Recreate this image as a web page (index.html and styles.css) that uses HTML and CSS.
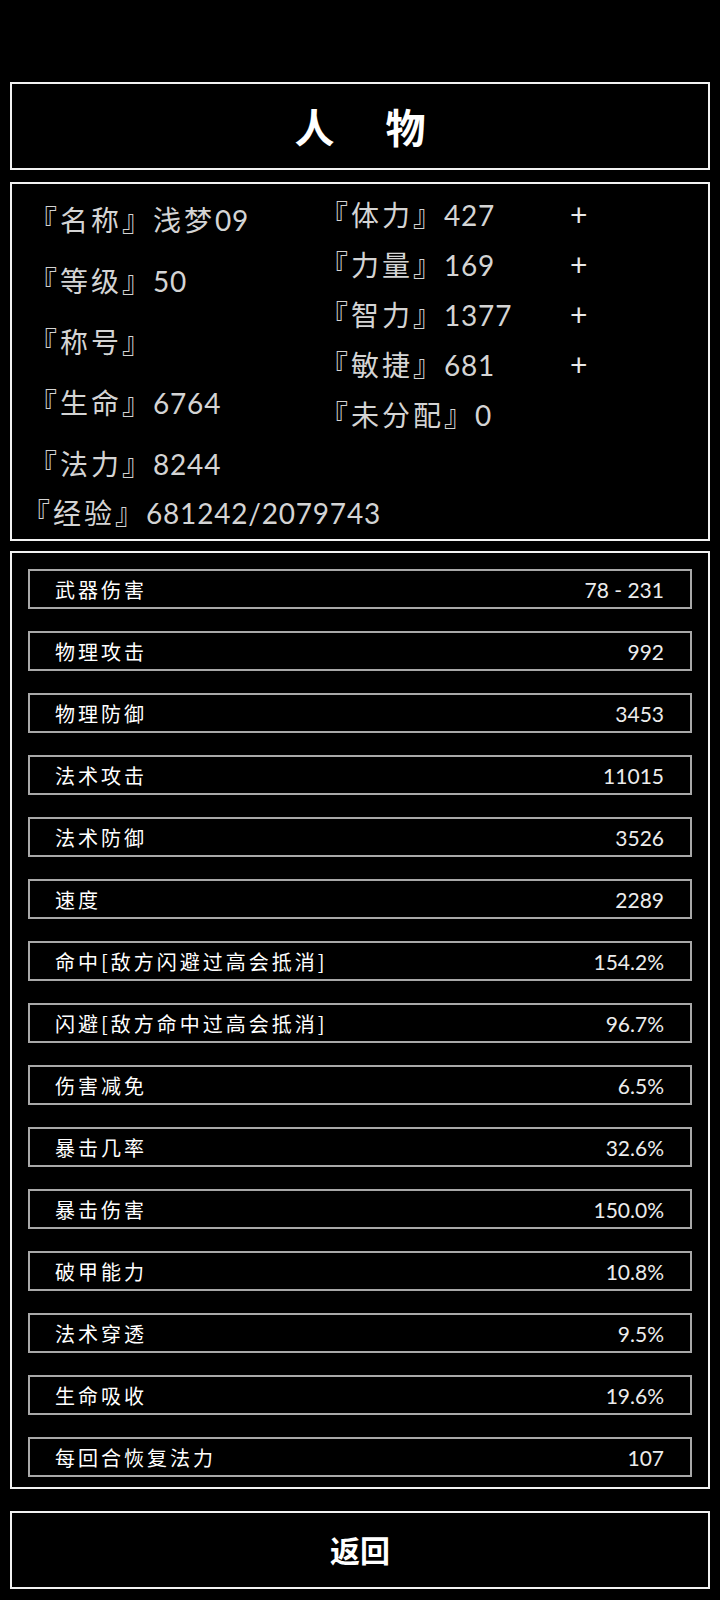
FILE: index.html
```html
<!DOCTYPE html>
<html lang="zh">
<head>
<meta charset="utf-8">
<title>人物</title>
<link rel="stylesheet" href="styles.css">
</head>
<body>
<div class="page">
  <div class="title-box">
    <span class="title-char">人</span>
    <span class="title-char">物</span>
  </div>

  <div class="info-box">
    <div class="info-cols">
      <div class="col-left">
        <div class="line">『名称』浅梦<span class="num">09</span></div>
        <div class="line">『等级』<span class="num">50</span></div>
        <div class="line">『称号』</div>
        <div class="line">『生命』<span class="num">6764</span></div>
        <div class="line">『法力』<span class="num">8244</span></div>
      </div>
      <div class="col-right">
        <div class="attr"><span>『体力』<span class="num">427</span></span><span class="plus">+</span></div>
        <div class="attr"><span>『力量』<span class="num">169</span></span><span class="plus">+</span></div>
        <div class="attr"><span>『智力』<span class="num">1377</span></span><span class="plus">+</span></div>
        <div class="attr"><span>『敏捷』<span class="num">681</span></span><span class="plus">+</span></div>
        <div class="attr"><span>『未分配』<span class="num">0</span></span></div>
      </div>
    </div>
    <div class="exp">『经验』<span class="num">681242/2079743</span></div>
  </div>

  <div class="stats-box">
    <div class="stat"><span class="label">武器伤害</span><span class="value">78 - 231</span></div>
    <div class="stat"><span class="label">物理攻击</span><span class="value">992</span></div>
    <div class="stat"><span class="label">物理防御</span><span class="value">3453</span></div>
    <div class="stat"><span class="label">法术攻击</span><span class="value">11015</span></div>
    <div class="stat"><span class="label">法术防御</span><span class="value">3526</span></div>
    <div class="stat"><span class="label">速度</span><span class="value">2289</span></div>
    <div class="stat"><span class="label">命中[敌方闪避过高会抵消]</span><span class="value">154.2%</span></div>
    <div class="stat"><span class="label">闪避[敌方命中过高会抵消]</span><span class="value">96.7%</span></div>
    <div class="stat"><span class="label">伤害减免</span><span class="value">6.5%</span></div>
    <div class="stat"><span class="label">暴击几率</span><span class="value">32.6%</span></div>
    <div class="stat"><span class="label">暴击伤害</span><span class="value">150.0%</span></div>
    <div class="stat"><span class="label">破甲能力</span><span class="value">10.8%</span></div>
    <div class="stat"><span class="label">法术穿透</span><span class="value">9.5%</span></div>
    <div class="stat"><span class="label">生命吸收</span><span class="value">19.6%</span></div>
    <div class="stat"><span class="label">每回合恢复法力</span><span class="value">107</span></div>
  </div>

  <div class="back-btn">返回</div>
</div>
</body>
</html>
```

FILE: styles.css
```css
* {
  box-sizing: border-box;
}

html, body {
  margin: 0;
  padding: 0;
  background: #000;
}

body {
  width: 720px;
  height: 1600px;
  overflow: hidden;
  font-family: "Noto Sans CJK SC", "Noto Sans", sans-serif;
  color: #fff;
}

.page {
  padding: 82px 10px 0 10px;
  display: flex;
  flex-direction: column;
}

.num {
  font-family: Lato, "Open Sans", sans-serif;
  letter-spacing: 0.8px;
}

/* Title */
.title-box {
  height: 88px;
  border: 2px solid #f2f2f2;
  display: flex;
  justify-content: center;
  align-items: center;
  gap: 51px;
}

.title-char {
  font-size: 40px;
  font-weight: 700;
  line-height: 1;
  color: #fff;
}

/* Info box */
.info-box {
  margin-top: 12px;
  height: 359px;
  border: 2px solid #f2f2f2;
  padding: 5px 0 0 0;
  color: #d4d4d4;
  font-size: 28px;
  letter-spacing: 3px;
}

.info-cols {
  display: grid;
  grid-template-columns: 308px 1fr;
}

.col-left {
  padding-left: 17px;
}

.col-left .line {
  height: 61px;
  line-height: 61px;
  white-space: nowrap;
}

.col-right {
  margin-top: 0;
}

.attr {
  height: 50px;
  line-height: 50px;
  display: grid;
  grid-template-columns: 250px auto;
  white-space: nowrap;
}

.plus {
  font-family: Lato, sans-serif;
  font-size: 30px;
  color: #e8e8e8;
}

.exp {
  padding-left: 10px;
  height: 36px;
  line-height: 36px;
  margin-top: 0;
  white-space: nowrap;
}

/* Stats */
.stats-box {
  margin-top: 10px;
  height: 938px;
  border: 2px solid #f2f2f2;
  padding: 16px 16px 0 16px;
  display: flex;
  flex-direction: column;
  gap: 22px;
}

.stat {
  height: 40px;
  border: 2px solid #a8a8a8;
  display: flex;
  align-items: center;
  justify-content: space-between;
  padding: 0 26px 0 25px;
}

.label {
  font-size: 20px;
  letter-spacing: 3px;
  color: #fff;
  white-space: nowrap;
}

.value {
  font-family: Lato, "Open Sans", sans-serif;
  font-size: 21px;
  color: #ececec;
}

/* Back button */
.back-btn {
  margin-top: 22px;
  height: 78px;
  border: 2px solid #f2f2f2;
  display: flex;
  justify-content: center;
  align-items: center;
  font-size: 30px;
  font-weight: 700;
  color: #fff;
  padding-bottom: 2px;
}
```
